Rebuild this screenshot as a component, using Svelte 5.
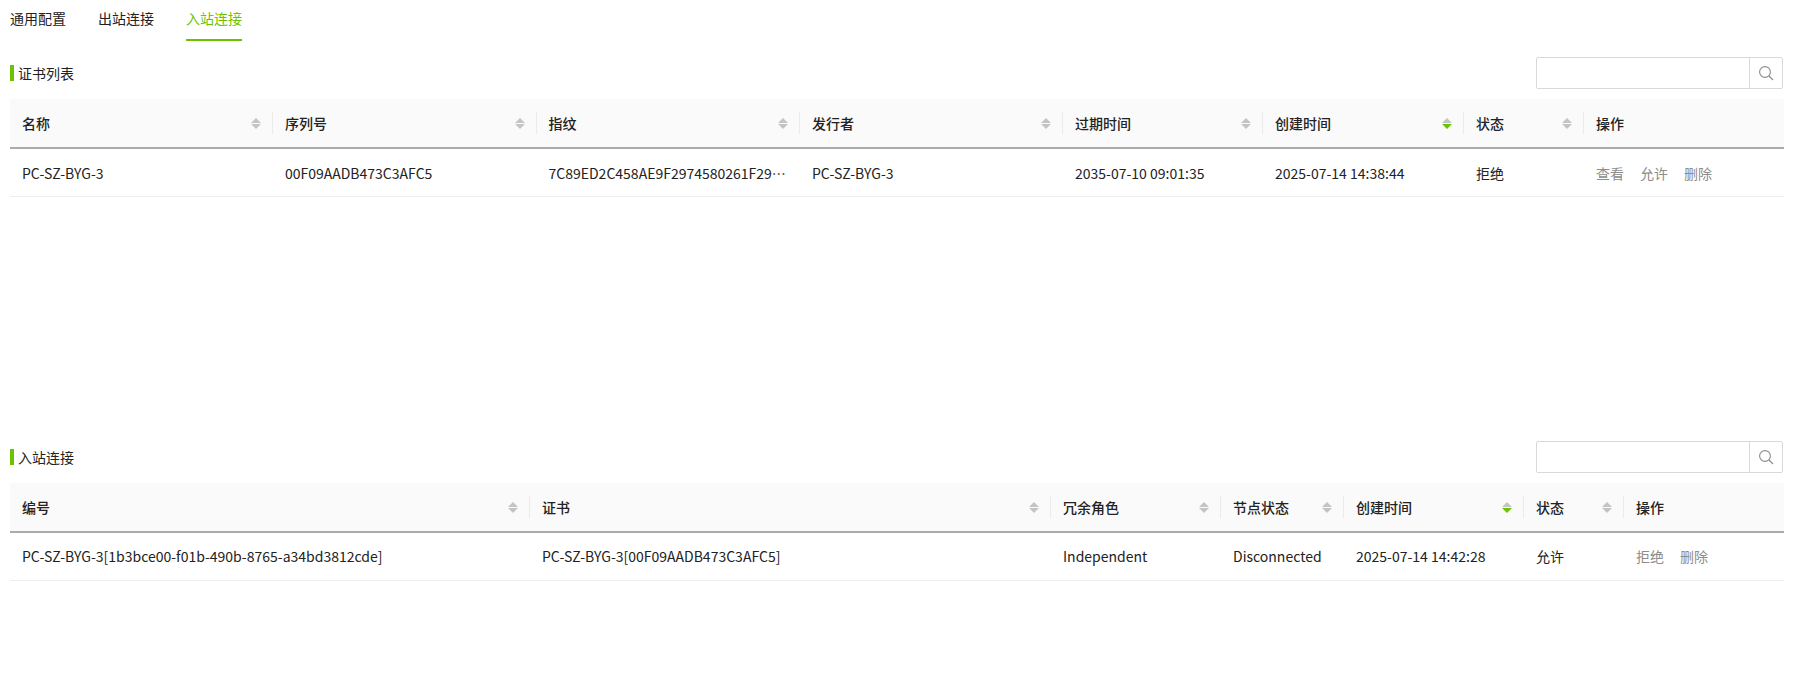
<script>
  const certCols = [263, 263.5, 263.5, 263, 200, 201, 120, 200];
  const certHead = ['名称', '序列号', '指纹', '发行者', '过期时间', '创建时间', '状态'];
  const certRow = ['PC-SZ-BYG-3', '00F09AADB473C3AFC5', '7C89ED2C458AE9F2974580261F29A1B3C4D5E6F70812', 'PC-SZ-BYG-3', '2035-07-10 09:01:35', '2025-07-14 14:38:44', '拒绝'];
  const inCols = [520, 521, 170, 123, 180, 100, 160];
  const inHead = ['编号', '证书', '冗余角色', '节点状态', '创建时间', '状态'];
  const inRow = ['PC-SZ-BYG-3[1b3bce00-f01b-490b-8765-a34bd3812cde]', 'PC-SZ-BYG-3[00F09AADB473C3AFC5]', 'Independent', 'Disconnected', '2025-07-14 14:42:28', '允许'];
  const sections = [
    { title: '证书列表', cols: certCols, head: certHead, row: certRow, sorted: 5, actions: ['查看', '允许', '删除'], cls: 'first' },
    { title: '入站连接', cols: inCols, head: inHead, row: inRow, sorted: 4, actions: ['拒绝', '删除'], cls: 'second' }
  ];
</script>

<div class="page">
  <nav class="tabs">
    <span class="tab">通用配置</span>
    <span class="tab">出站连接</span>
    <span class="tab active">入站连接</span>
  </nav>

  {#each sections as s}
    <section class="section {s.cls}">
      <div class="head">
        <h2 class="title">{s.title}</h2>
        <div class="search">
          <div class="field"></div>
          <div class="btn">
            <svg width="16" height="16" viewBox="0 0 16 16" fill="none" stroke="#8c8c8c" stroke-width="1.1">
              <circle cx="7" cy="7" r="5.4" />
              <path d="M11 11l4 4" />
            </svg>
          </div>
        </div>
      </div>
      <table>
        <colgroup>
          {#each s.cols as w}<col style="width:{w}px" />{/each}
        </colgroup>
        <thead>
          <tr>
            {#each s.head as h, i}
              <th>
                <div class="th">
                  <span>{h}</span>
                  <span class="sort">
                    <i class="up"></i>
                    <i class="down" class:on={i === s.sorted}></i>
                  </span>
                </div>
              </th>
            {/each}
            <th><div class="th last"><span>操作</span></div></th>
          </tr>
        </thead>
        <tbody>
          <tr>
            {#each s.row as c}<td>{c}</td>{/each}
            <td>
              <div class="actions">
                {#each s.actions as a}<span>{a}</span>{/each}
              </div>
            </td>
          </tr>
        </tbody>
      </table>
    </section>
  {/each}
</div>

<style>
  :global(body) {
    margin: 0;
    background: #fff;
  }
  .page {
    padding: 0 14px 0 10px;
    font-family: "Noto Sans CJK SC", "Noto Sans", sans-serif;
    font-size: 14px;
    color: #222;
  }
  .tabs {
    display: flex;
    gap: 32px;
    height: 41px;
    margin-bottom: 16px;
  }
  .tab {
    box-sizing: border-box;
    height: 41px;
    line-height: 37px;
  }
  .tab.active {
    color: #6cc400;
    border-bottom: 2px solid #6cc400;
  }
  .section.first {
    height: 384px;
  }
  .head {
    display: flex;
    justify-content: space-between;
    align-items: center;
    height: 32px;
    margin-bottom: 10px;
    padding-right: 1px;
  }
  .title {
    margin: 0;
    height: 16px;
    line-height: 16px;
    font-size: 14px;
    font-weight: 400;
    border-left: 4px solid #6cc400;
    padding-left: 4px;
  }
  .search {
    box-sizing: border-box;
    display: flex;
    width: 247px;
    height: 32px;
    border: 1px solid #d9d9d9;
    border-radius: 2px;
  }
  .field {
    flex: 1;
  }
  .btn {
    width: 32px;
    border-left: 1px solid #d9d9d9;
    display: flex;
    align-items: center;
    justify-content: center;
  }
  table {
    width: 1774px;
    table-layout: fixed;
    border-collapse: separate;
    border-spacing: 0;
  }
  th {
    height: 48px;
    padding: 0;
    background: #fafafa;
    border-bottom: 2px solid #a9abad;
    font-weight: 500;
    text-align: left;
  }
  .th {
    display: flex;
    align-items: center;
    justify-content: space-between;
    height: 22px;
    padding: 0 11px 0 12px;
    border-right: 1px solid #ebebeb;
  }
  .th.last {
    border-right: 0;
  }
  .sort {
    display: flex;
    flex-direction: column;
    gap: 1px;
  }
  .sort i {
    display: block;
    width: 0;
    height: 0;
    border-left: 5px solid transparent;
    border-right: 5px solid transparent;
  }
  .sort .up {
    border-bottom: 5.5px solid #c4c4c4;
  }
  .sort .down {
    border-top: 5.5px solid #c4c4c4;
  }
  .sort .down.on {
    border-top-color: #6cc400;
  }
  td {
    box-sizing: border-box;
    height: 48px;
    padding: 0 12px;
    border-bottom: 1px solid #ededed;
    white-space: nowrap;
    overflow: hidden;
    text-overflow: ellipsis;
  }
  .second td {
    padding-bottom: 2px;
  }
  .actions {
    display: flex;
    gap: 16px;
    color: #8c8c8c;
  }
</style>
